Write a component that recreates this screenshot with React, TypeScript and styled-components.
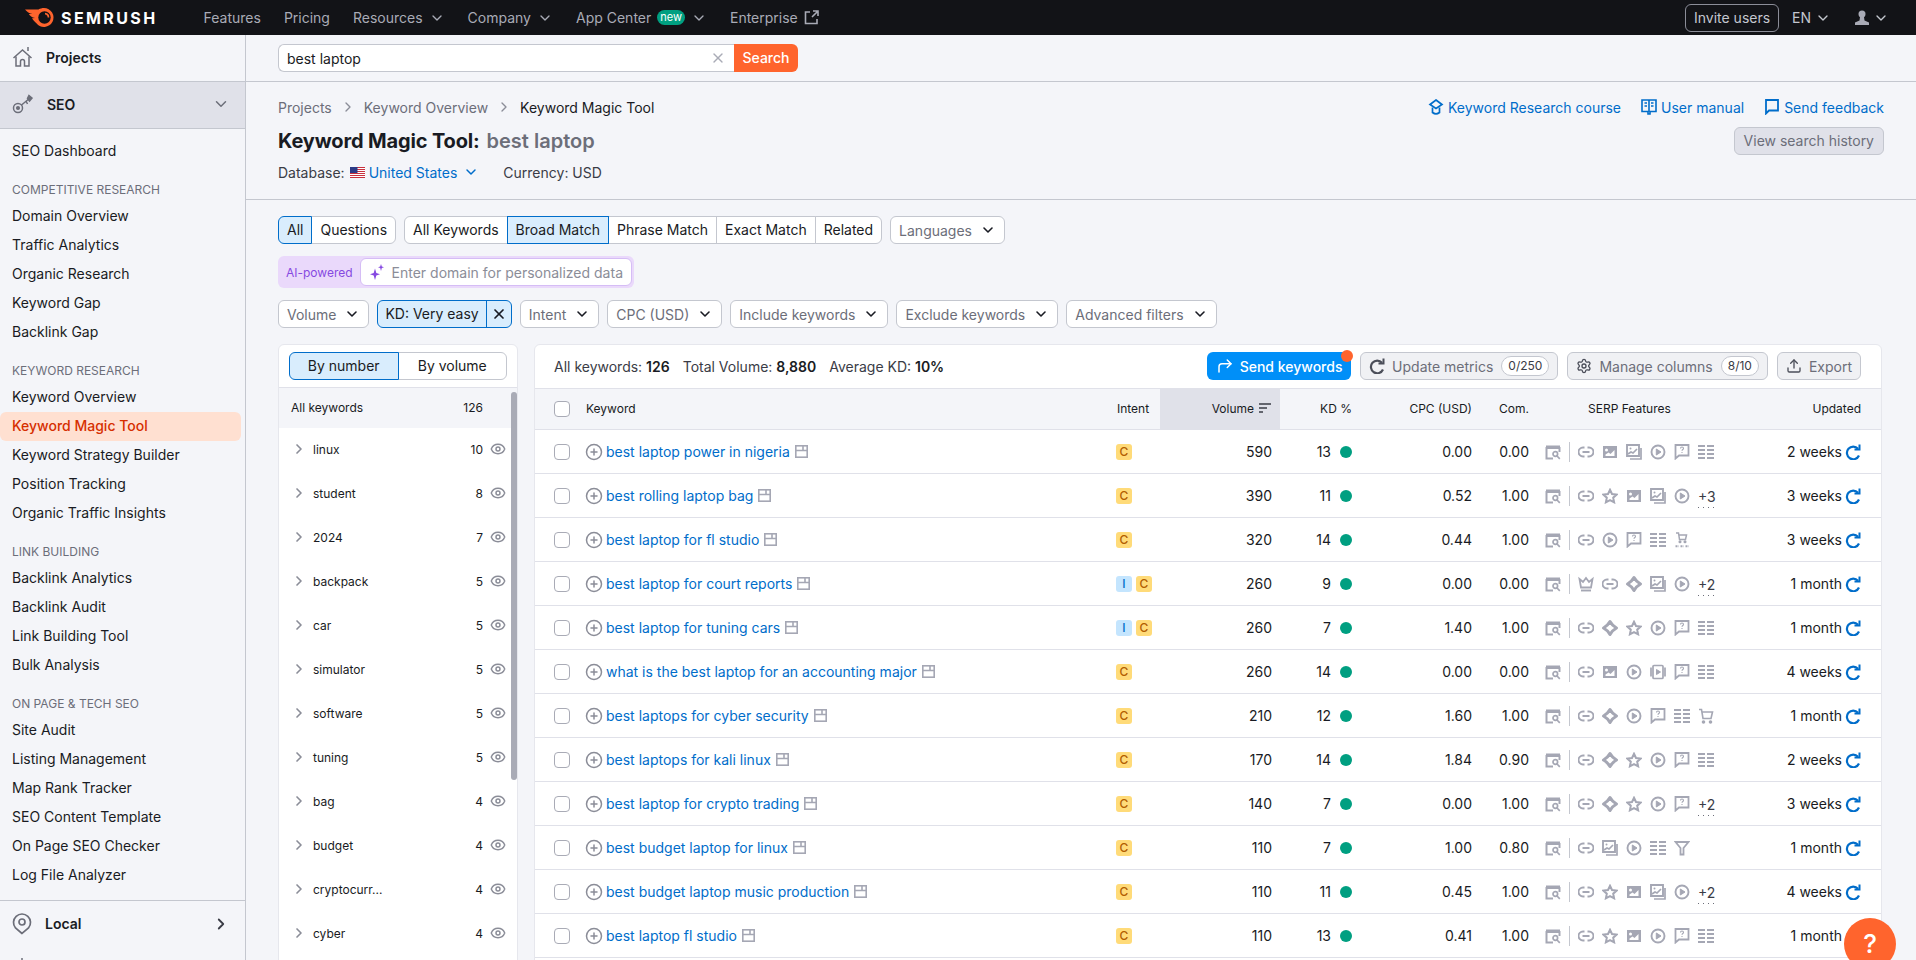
import React from "react";
import styled, { createGlobalStyle, css } from "styled-components";
import {
  ChevronDown,
  ChevronRight,
  CirclePlus,
  CornerUpRight,
  Eye,
  Settings,
  Upload,
  X,
} from "lucide-react";

const GlobalStyle = createGlobalStyle`
  * { box-sizing: border-box; }
  html, body { margin: 0; padding: 0; height: 100%; overflow: hidden; }
  body {
    background: #f4f5f9;
    color: #191b23;
    font-family: Inter, "Liberation Sans", sans-serif;
    font-size: 14px;
  }
`;

const Page = styled.div`
  height: 960px;
  display: flex;
  flex-direction: column;
  overflow: hidden;
`;

/* top bar */
const TopBar = styled.header`
  flex: 0 0 35px;
  background: #121317;
  display: flex;
  align-items: center;
  padding: 0 27px 0 25px;
`;

const Logo = styled.div`
  display: flex;
  align-items: center;
  gap: 5px;
  margin-right: 46px;
`;

const LogoText = styled.span`
  color: #fff;
  font-size: 16px;
  font-weight: 700;
  letter-spacing: 2.4px;
`;

const TopNav = styled.nav`
  display: flex;
  align-items: center;
  gap: 23px;
`;

const TopLink = styled.span`
  display: flex;
  align-items: center;
  gap: 6px;
  color: #a9abb6;
  white-space: nowrap;
`;

const NewBadge = styled.span`
  background: #009f81;
  color: #fff;
  font-size: 11px;
  line-height: 15px;
  padding: 0 3px;
  border-radius: 8px;
`;

const TopRight = styled.div`
  margin-left: auto;
  display: flex;
  align-items: center;
`;

const InviteButton = styled.span`
  height: 28px;
  width: 94px;
  display: flex;
  align-items: center;
  justify-content: center;
  border: 1px solid #8b8d98;
  border-radius: 6px;
  color: #c4c7cf;
  margin-right: 13px;
`;

const TopPlain = styled.span<{ $gap?: number }>`
  display: flex;
  align-items: center;
  gap: 4px;
  color: #c4c7cf;
  margin-right: ${(p) => p.$gap ?? 0}px;
`;

/* body layout */
const Body = styled.div`
  flex: 1;
  display: flex;
  min-height: 0;
`;

const Sidebar = styled.aside`
  flex: 0 0 246px;
  border-right: 1px solid #c4c7cf;
  overflow: hidden;
`;

const SideHead = styled.div<{ $active?: boolean }>`
  height: 47px;
  display: flex;
  align-items: center;
  padding: 0 15px 2px 12px;
  gap: 13px;
  font-weight: 600;
  color: #191b23;
  background: ${(p) => (p.$active ? "#e0e1e9" : "transparent")};
  border-bottom: 1px solid #c4c7cf;

  svg:last-child:not(:first-child) {
    margin-left: auto;
  }
`;

const SideFoot = styled(SideHead)`
  border-bottom: 0;
`;

const SideNav = styled.nav`
  padding: 8px 0 10px;
  border-bottom: 1px solid #c4c7cf;
`;

const SideGroup = styled.div`
  margin-top: 12px;
`;

const SideTitle = styled.div`
  height: 24px;
  line-height: 24px;
  padding-left: 12px;
  font-size: 12px;
  color: #6c6e79;
  white-space: nowrap;
`;

const SideItem = styled.div<{ $active?: boolean }>`
  height: 29px;
  line-height: 28px;
  padding-left: 12px;
  width: 241px;
  border-radius: 6px;
  white-space: nowrap;
  color: ${(p) => (p.$active ? "#d62f00" : "#191b23")};
  font-weight: ${(p) => (p.$active ? 500 : 400)};
  background: ${(p) => (p.$active ? "#ffe0d1" : "transparent")};
`;

const Main = styled.main`
  flex: 1;
  min-width: 0;
  overflow: hidden;
`;

const SearchStrip = styled.div`
  height: 47px;
  padding: 9px 0 0 32px;
  border-bottom: 1px solid #c4c7cf;
  display: flex;
  align-items: flex-start;
`;

const SearchInput = styled.div`
  width: 456px;
  height: 28px;
  background: #fff;
  border: 1px solid #c4c7cf;
  border-right: 0;
  border-radius: 6px 0 0 6px;
  display: flex;
  align-items: center;
  justify-content: space-between;
  padding: 0 8px;
`;

const SearchButton = styled.span`
  width: 64px;
  height: 28px;
  line-height: 28px;
  text-align: center;
  color: #fff;
  font-weight: 500;
  background: #ff642d;
  border-radius: 0 6px 6px 0;
`;

const PageHead = styled.section`
  display: flex;
  justify-content: space-between;
  padding: 15px 32px 17px 32px;
  border-bottom: 1px solid #c4c7cf;
`;

const HeadLeft = styled.div`
  display: flex;
  flex-direction: column;
`;

const HeadRight = styled.div`
  display: flex;
  flex-direction: column;
  align-items: flex-end;
  gap: 10px;
`;

const Crumbs = styled.div`
  height: 20px;
  display: flex;
  align-items: center;
  color: #6c6e79;
`;

const CrumbArrow = styled(ChevronRight)`
  color: #8b8d98;
  width: 16px;
  height: 16px;
  margin-inline: 8px;
`;

const CrumbLast = styled.span`
  color: #191b23;
`;

const Title = styled.h1`
  margin: 10px 0 0;
  font-size: 20px;
  line-height: 28px;
  font-weight: 700;
  letter-spacing: -0.15px;
  white-space: nowrap;
`;

const TitleQuery = styled.span`
  color: #6c6e79;
  font-weight: 600;
  letter-spacing: 0;
  margin-left: 7px;
`;

const DbRow = styled.div`
  margin-top: 7px;
  height: 20px;
  display: flex;
  align-items: center;
  color: #3a3c46;
`;

const DbLabel = styled.span`
  margin-right: 5px;
`;

const DbLink = styled.span`
  color: #006dca;
  margin: 0 6px 0 4px;
`;

const Currency = styled.span`
  margin-left: 24px;
`;

const HeadLinks = styled.div`
  height: 20px;
  display: flex;
  align-items: center;
  gap: 20px;
`;

const HeadLink = styled.span`
  display: flex;
  align-items: center;
  gap: 4px;
  color: #006dca;
`;

const HistoryButton = styled.span`
  height: 28px;
  padding: 0 9px;
  line-height: 26px;
  background: #e0e1e9;
  border: 1px solid #c4c7cf;
  border-radius: 6px;
  color: #6c6e79;
`;

const Content = styled.div`
  padding: 16px 34px 0 32px;
`;

const FilterRow = styled.div`
  display: flex;
  gap: 8px;
  margin-bottom: 12px;
`;

const Segments = styled.div`
  display: flex;
`;

const Segment = styled.span<{ $active?: boolean }>`
  height: 28px;
  line-height: 26px;
  padding: 0 8px;
  margin-left: -1px;
  white-space: nowrap;
  background: ${(p) => (p.$active ? "#d9edfd" : "#fff")};
  border: 1px solid ${(p) => (p.$active ? "#006dca" : "#c4c7cf")};
  position: relative;
  z-index: ${(p) => (p.$active ? 1 : 0)};

  &:first-child {
    margin-left: 0;
    border-radius: 6px 0 0 6px;
  }
  &:last-child {
    border-radius: 0 6px 6px 0;
  }
`;

const Select = styled.span`
  height: 28px;
  display: flex;
  align-items: center;
  gap: 8px;
  padding: 0 8px;
  background: #fff;
  border: 1px solid #c4c7cf;
  border-radius: 6px;
  color: #6c6e79;
  white-space: nowrap;

  svg {
    color: #191b23;
  }
`;

const ActiveFilter = styled.span`
  height: 28px;
  display: flex;
  align-items: center;
  background: #d9edfd;
  border: 1px solid #006dca;
  border-radius: 6px;
  white-space: nowrap;
`;

const ActiveLabel = styled.span`
  padding: 0 7px;
  line-height: 26px;
  border-right: 1px solid #006dca;
`;

const ActiveClear = styled.span`
  width: 24px;
  display: flex;
  justify-content: center;
`;

const AiBox = styled.div`
  width: 356px;
  height: 32px;
  display: flex;
  align-items: center;
  background: #ead9fb;
  border-radius: 6px;
  padding: 2px;
`;

const AiLabel = styled.span`
  width: 80px;
  padding-left: 6px;
  font-size: 12px;
  color: #8649e1;
  white-space: nowrap;
`;

const AiInput = styled.div`
  flex: 1;
  height: 28px;
  display: flex;
  align-items: center;
  gap: 7px;
  padding: 0 8px;
  background: #fff;
  border: 1px solid #d5bdf5;
  border-radius: 6px;
  color: #8b8d98;
  white-space: nowrap;
`;

const Panels = styled.div`
  display: flex;
  gap: 16px;
  margin-top: 16px;
`;

const Panel = styled.div`
  background: #fff;
  border: 1px solid #e6e7ed;
  border-radius: 6px 6px 0 0;
  height: 700px;
  overflow: hidden;
`;

/* left keyword groups */
const GroupPanel = styled(Panel)`
  flex: 0 0 240px;
  position: relative;
`;

const GroupTabs = styled.div`
  display: flex;
  padding: 7px 10px;
  border-bottom: 1px solid #e0e1e9;
`;

const GroupTab = styled(Segment)`
  flex: 1;
  text-align: center;
`;

const GroupHead = styled.div`
  height: 40px;
  background: #f4f5f9;
  display: flex;
  align-items: center;
  justify-content: space-between;
  padding: 0 34px 1px 12px;
  font-size: 12px;
`;

const GroupRow = styled.div`
  height: 44px;
  display: flex;
  align-items: center;
  padding: 0 11px 2px 12px;
  font-size: 12px;
  color: #191b23;
`;

const GroupName = styled.span`
  flex: 1;
  margin-left: 6px;
`;

const GroupCount = styled.span`
  width: 30px;
  text-align: right;
  margin-right: 7px;
`;

const Scrollbar = styled.div`
  position: absolute;
  right: 0;
  top: 47px;
  width: 6px;
  height: 388px;
  border-radius: 3px;
  background: #a9abb6;
`;

/* right table */
const TablePanel = styled(Panel)`
  flex: 1;
  min-width: 0;
`;

const Toolbar = styled.div`
  height: 44px;
  display: flex;
  align-items: center;
  padding: 0 20px 1px 19px;
  border-bottom: 1px solid #e0e1e9;
`;

const Summary = styled.div`
  display: flex;
  gap: 13px;
  color: #3a3c46;
  margin-right: auto;
`;

const SummaryNum = styled.b`
  font-weight: 600;
  color: #191b23;
`;

const ToolActions = styled.div`
  display: flex;
  gap: 9px;
`;

const SendButton = styled.span`
  position: relative;
  height: 28px;
  width: 144px;
  display: flex;
  align-items: center;
  justify-content: center;
  gap: 6px;
  background: #008ff8;
  color: #fff;
  font-weight: 500;
  border-radius: 6px;
`;

const RedDot = styled.span`
  position: absolute;
  top: -2px;
  right: -2px;
  width: 12px;
  height: 12px;
  border-radius: 50%;
  background: #ff642d;
`;

const GrayButton = styled.span`
  height: 28px;
  display: flex;
  align-items: center;
  gap: 7px;
  padding: 0 8px;
  background: #f0f1f4;
  border: 1px solid #c4c7cf;
  border-radius: 6px;
  color: #6c6e79;
  white-space: nowrap;

  > svg {
    color: #4b4e59;
  }
`;

const Counter = styled.span`
  height: 20px;
  line-height: 18px;
  padding: 0 6px;
  margin-left: 1px;
  font-size: 12px;
  background: #fff;
  border: 1px solid #c4c7cf;
  border-radius: 10px;
  color: #3a3c46;
`;

const columns = css`
  display: grid;
  grid-template-columns: 51px 530px 44px 120px 72px 120px 57px 220px 1fr;
  align-items: center;
`;

const HeadRow = styled.div`
  ${columns};
  height: 41px;
  background: #f4f5f9;
  border-bottom: 1px solid #e0e1e9;
  font-size: 12px;
`;

const HeadCell = styled.div<{ $sorted?: boolean; $right?: boolean; $pad?: number }>`
  height: 100%;
  display: flex;
  align-items: center;
  justify-content: ${(p) => (p.$right ? "flex-end" : "flex-start")};
  gap: 4px;
  padding: ${(p) => (p.$right ? `0 ${p.$pad ?? 0}px 2px 0` : `0 0 2px ${p.$pad ?? 0}px`)};
  background: ${(p) => (p.$sorted ? "#e0e1e9" : "transparent")};
`;

const Row = styled.div`
  ${columns};
  height: 44px;
  border-bottom: 1px solid #e0e1e9;
`;

const CheckCell = styled.div`
  padding-left: 19px;
`;

const Check = styled.span`
  display: block;
  width: 16px;
  height: 16px;
  background: #fff;
  border: 1px solid #a9abb6;
  border-radius: 4px;
`;

const KeywordCell = styled.div`
  display: flex;
  align-items: center;
  gap: 3px;
  min-width: 0;
  color: #8b8d98;
`;

const PlusIcon = styled(CirclePlus)`
  margin-left: -1px;
  flex: none;
`;

const KeywordLink = styled.span`
  color: #006dca;
  white-space: nowrap;
  margin-right: 2px;
`;

const Intents = styled.div`
  display: flex;
  gap: 4px;
`;

const Intent = styled.span<{ $kind: "C" | "I" }>`
  width: 16px;
  height: 16px;
  line-height: 16px;
  text-align: center;
  font-size: 12px;
  font-weight: 500;
  border-radius: 3px;
  color: ${(p) => (p.$kind === "C" ? "#b25e00" : "#006dca")};
  background: ${(p) => (p.$kind === "C" ? "#ffdb79" : "#c4e5fe")};
`;

const NumCell = styled.div<{ $pad?: number }>`
  text-align: right;
  padding-right: ${(p) => p.$pad ?? 0}px;
  color: #191b23;
`;

const KdCell = styled.div`
  display: flex;
  justify-content: flex-end;
  align-items: center;
  gap: 9px;
`;

const KdDot = styled.span`
  width: 12px;
  height: 12px;
  border-radius: 50%;
  background: #009f81;
`;

const SerpCell = styled.div`
  display: flex;
  align-items: center;
  gap: 8px;
  padding-left: 16px;
  color: #a5a7b4;
`;

const SerpDivider = styled.span`
  width: 1px;
  height: 20px;
  background: #c4c7cf;
`;

const SerpSlot = styled.span`
  width: 16px;
  height: 16px;
  display: block;
  flex: none;
`;

const SerpMore = styled.span`
  width: 19px;
  font-size: 14px;
  line-height: 16px;
  color: #3a3c46;
  white-space: nowrap;
  padding-bottom: 3px;
  margin-top: 5px;
  background: repeating-linear-gradient(90deg, #6c6e79 0 1.5px, transparent 1.5px 5px) bottom / 100% 1px no-repeat;
`;

const UpdatedCell = styled.div`
  display: flex;
  justify-content: flex-end;
  align-items: center;
  gap: 3px;
  padding-right: 20px;
`;

const HelpButton = styled.div`
  position: fixed;
  left: 1844px;
  top: 918px;
  width: 52px;
  height: 52px;
  border-radius: 50%;
  background: #ff642d;
  color: #fff;
  font-size: 26px;
  font-weight: 500;
  line-height: 52px;
  text-align: center;
`;

/* drawn icons */
type SvgProps = React.SVGProps<SVGSVGElement>;

const Svg = ({ children, ...rest }: SvgProps) => (
  <svg width="16" height="16" viewBox="0 0 16 16" fill="none" stroke="currentColor" strokeWidth="1.7" {...rest}>
    {children}
  </svg>
);

const Flame = () => (
  <svg width="31" height="19" viewBox="0 0 31 19">
    <path
      fill="#ff642d"
      d="M0 1.500h13.500c1.700-1 3.500-1.500 5.500-1.500a9.500 9.500 0 1 1-7.600 15.200C9.600 13.500 8 12 7 10.300l3-.3C7 9.500 4.800 7.800 3.800 6h3.700C4.500 5.500 1.800 3.800 0 1.500z"
    />
    <circle cx="19.500" cy="9.500" r="6.200" fill="#121317" />
    <path fill="#ff642d" d="M20 4.800a4.700 4.700 0 0 1 4.300 4.700h-1.700a3 3 0 0 0-2.600-3z" />
  </svg>
);

const HomeIcon = () => (
  <svg width="21" height="22" viewBox="0 0 21 22" fill="none" stroke="#6c6e79" strokeWidth="1.5">
    <path d="M1.500 12 10.500 4l9 8" />
    <path d="M4 10.500V20h4.500v-4.500a2 2 0 0 1 4 0V20H17v-9.500" />
    <path d="M16 1v4" />
  </svg>
);

const SeoIcon = () => (
  <svg width="22" height="22" viewBox="0 0 22 22" fill="none" stroke="#6c6e79" strokeWidth="1.5">
    <circle cx="6" cy="15" r="4.500" />
    <circle cx="6" cy="15" r="1.300" fill="#6c6e79" />
    <path d="M9.500 12 18 5" />
    <path d="m14 8 1.500 3M17 2.500l3 2.500-2.500 3-2-2.500z" fill="#6c6e79" />
  </svg>
);

const PinIcon = () => (
  <svg width="20" height="22" viewBox="0 0 20 22" fill="none" stroke="#6c6e79" strokeWidth="1.7">
    <path d="M10 20.500 3.500 15a8.500 8.500 0 1 1 13 0z" />
    <circle cx="10" cy="9" r="3" />
  </svg>
);

const TickIcon = () => (
  <svg width="20" height="26" viewBox="0 0 20 26" fill="none" stroke="#6c6e79" strokeWidth="1.5">
    <path d="M10 0v4" />
  </svg>
);

const FlagIcon = () => (
  <svg width="15" height="11" viewBox="0 0 15 11">
    <rect width="15" height="11" fill="#fff" />
    <path d="M0 .5h15M0 2.500h15M0 4.500h15M0 6.500h15M0 8.500h15M0 10.500h15" stroke="#c8313e" strokeWidth="1" />
    <rect width="7.500" height="6" fill="#2b3a86" />
  </svg>
);

const CourseIcon = () => (
  <svg width="16" height="16" viewBox="0 0 16 16" fill="none" stroke="#006dca" strokeWidth="1.7">
    <path d="M8 1 14 5.500 8 9.500 2 5.500z" />
    <path d="M4.500 8.500v5c2 1.500 5 1.500 7 0v-5" />
  </svg>
);

const BookIcon = () => (
  <svg width="16" height="16" viewBox="0 0 16 16" fill="none" stroke="#006dca" strokeWidth="1.6">
    <path d="M1 1h14v11.500H9V15H7v-2.500H1z" />
    <path d="M8 1v12" />
    <path d="M3.500 4H6M3.500 7H6M10 4h2.500M10 7h2.500" strokeWidth="1.300" />
  </svg>
);

const FeedbackIcon = () => (
  <svg width="16" height="16" viewBox="0 0 16 16" fill="none" stroke="#006dca" strokeWidth="1.8">
    <path d="M2 1h12v10.500H5L2 14.500z" />
  </svg>
);

const SparkIcon = () => (
  <svg width="16" height="16" viewBox="0 0 16 16" fill="#8649e1">
    <path d="M6 4.500 7.300 9 11 10.200 7.300 11.500 6 16 4.700 11.500 1 10.200 4.700 9z" />
    <path d="M12 0l.8 2.500 2.200.8-2.200.8L12 7l-.8-2.900L9 3.300l2.200-.8z" />
  </svg>
);

const RefreshIcon = ({ color = "#006dca" }: { color?: string }) => (
  <svg width="16" height="16" viewBox="0 0 16 16" fill="none" stroke={color} strokeWidth="2.200">
    <path d="M13 4.800A6.300 6.300 0 1 0 14 11.500" />
    <path d="M14.500 .5v5H9.500" strokeWidth="2" />
  </svg>
);

const UserIcon = () => (
  <svg width="14" height="15" viewBox="0 0 14 15" fill="#a9abb6">
    <circle cx="7" cy="4" r="3.500" />
    <path d="M5 7h4l.5 3.500L14 12.500V15H0v-2.500l4.500-2z" />
  </svg>
);

const SortIcon = () => (
  <svg width="14" height="12" viewBox="0 0 14 12" fill="none" stroke="#3a3c46" strokeWidth="1.500">
    <path d="M1 2h12M1 6h8M1 10h4" />
  </svg>
);

const EyeIcon = styled(Eye)`
  color: #8b8d98;
  flex: none;
`;

const SaveIcon = styled.svg`
  width: 13px;
  height: 13px;
  flex: none;
`;

const serpIcons: Record<string, React.ReactNode> = {
  page: (
    <Svg>
      <path d="M1.500 3v11.500H8M14.500 3v5" strokeWidth="2" />
      <path d="M1 1.500h14v3.500H1z" fill="currentColor" stroke="none" />
      <circle cx="10.300" cy="10" r="2.300" />
      <path d="m12 12 2.800 2.800" />
    </Svg>
  ),
  link: (
    <Svg strokeWidth="1.900">
      <path d="M6.500 3.500H5a4.500 4.500 0 0 0 0 9h1.500M9.500 3.500H11a4.500 4.500 0 0 1 0 9H9.500M4.500 8h7" />
    </Svg>
  ),
  image: (
    <Svg stroke="none" fill="currentColor">
      <path fillRule="evenodd" d="M1 2h14v12H1zm2.500 8.500v1.500h9V6l-4 4-2-1.500zM4.500 4.500a1.500 1.500 0 1 0 0 3 1.500 1.500 0 0 0 0-3z" />
    </Svg>
  ),
  images: (
    <Svg>
      <path d="M1 1h12v11H1z" strokeWidth="1.900" />
      <path d="M15 4v11H4" />
      <path d="m2 10 3-2 2 1 4-4" />
      <circle cx="4.500" cy="4.500" r="1" fill="currentColor" stroke="none" />
    </Svg>
  ),
  play: (
    <Svg strokeWidth="1.900">
      <circle cx="8" cy="8" r="6.500" />
      <path d="M6.300 5v6L11 8z" fill="currentColor" strokeWidth="1" />
    </Svg>
  ),
  question: (
    <Svg strokeWidth="1.800">
      <path d="M1.500 1h13v10.500H5l-3.500 3z" />
      <path d="M6.500 4.500c0-2 3-2 3 0 0 1-1.500 1-1.500 2.300M8 8v1" strokeWidth="1.100" />
    </Svg>
  ),
  list: (
    <Svg strokeWidth="2">
      <path d="M0 2h7M9 2h7M0 6h7M9 6h7M0 10h7M9 10h7M0 14h7M9 14h7" />
    </Svg>
  ),
  star: (
    <Svg strokeWidth="2">
      <path d="m8 1.800 2 4.200 4.600.6-3.400 3.100.9 4.600L8 12.100l-4.100 2.200.9-4.600-3.400-3.100L6 6z" />
    </Svg>
  ),
  crown: (
    <Svg strokeWidth="1.800">
      <path d="m1.500 3 3.500 3 3-4 3 4 3.500-3-1.500 8.500H3z" />
      <path d="M3 14.500h10" strokeWidth="1.900" />
    </Svg>
  ),
  diamond: (
    <svg width="18" height="18" viewBox="0 0 18 18" fill="none" stroke="currentColor" strokeWidth="3" strokeLinejoin="round" style={{ margin: "-1px" }}>
      <path d="M9 2.500Q11.300 6.700 15.500 9 11.300 11.300 9 15.500 6.700 11.300 2.500 9 6.700 6.700 9 2.500z" />
    </svg>
  ),
  cartDots: (
    <Svg strokeWidth="1.500">
      <path d="M2 1h2.500l1 6.500h6l1-4.500H5" />
      <circle cx="6" cy="9.800" r=".8" fill="currentColor" />
      <circle cx="11" cy="9.800" r=".8" fill="currentColor" />
      <path d="M1.500 14.300h3M6.500 14.300h3M11.500 14.300h3" strokeWidth="2" strokeDasharray="2 .6" />
    </Svg>
  ),
  cart: (
    <Svg strokeWidth="1.600">
      <path d="M1 1.500h2.500l1.500 9h8l1.500-6.500H4" />
      <circle cx="5.500" cy="14" r="1" fill="currentColor" />
      <circle cx="12.500" cy="14" r="1" fill="currentColor" />
    </Svg>
  ),
  funnel: (
    <Svg strokeWidth="1.800">
      <path d="M1.500 2h13L9.500 8v6.500h-3V8z" />
    </Svg>
  ),
  video: (
    <Svg>
      <path d="M4 1.500h8a1 1 0 0 1 1 1v11a1 1 0 0 1-1 1H4a1 1 0 0 1-1-1v-11a1 1 0 0 1 1-1z" />
      <path d="M1 3.500v9M15 3.500v9" />
      <path d="M6.500 5.500v5L10.500 8z" fill="currentColor" strokeWidth="1" />
    </Svg>
  ),
};

const sideGroups = [
  {
    title: "COMPETITIVE RESEARCH",
    items: ["Domain Overview", "Traffic Analytics", "Organic Research", "Keyword Gap", "Backlink Gap"],
  },
  {
    title: "KEYWORD RESEARCH",
    items: [
      "Keyword Overview",
      "Keyword Magic Tool",
      "Keyword Strategy Builder",
      "Position Tracking",
      "Organic Traffic Insights",
    ],
  },
  {
    title: "LINK BUILDING",
    items: ["Backlink Analytics", "Backlink Audit", "Link Building Tool", "Bulk Analysis"],
  },
  {
    title: "ON PAGE & TECH SEO",
    items: [
      "Site Audit",
      "Listing Management",
      "Map Rank Tracker",
      "SEO Content Template",
      "On Page SEO Checker",
      "Log File Analyzer",
    ],
  },
];

const keywordGroups: [string, number][] = [
  ["linux", 10],
  ["student", 8],
  ["2024", 7],
  ["backpack", 5],
  ["car", 5],
  ["simulator", 5],
  ["software", 5],
  ["tuning", 5],
  ["bag", 4],
  ["budget", 4],
  ["cryptocurr...", 4],
  ["cyber", 4],
];

type KeywordRow = {
  keyword: string;
  intents: ("C" | "I")[];
  volume: number;
  kd: number;
  cpc: string;
  com: string;
  serp: string[];
  more?: number;
  updated: string;
};

const rows: KeywordRow[] = [
  { keyword: "best laptop power in nigeria", intents: ["C"], volume: 590, kd: 13, cpc: "0.00", com: "0.00", serp: ["link", "image", "images", "play", "question", "list"], updated: "2 weeks" },
  { keyword: "best rolling laptop bag", intents: ["C"], volume: 390, kd: 11, cpc: "0.52", com: "1.00", serp: ["link", "star", "image", "images", "play"], more: 3, updated: "3 weeks" },
  { keyword: "best laptop for fl studio", intents: ["C"], volume: 320, kd: 14, cpc: "0.44", com: "1.00", serp: ["link", "play", "question", "list", "cartDots"], updated: "3 weeks" },
  { keyword: "best laptop for court reports", intents: ["I", "C"], volume: 260, kd: 9, cpc: "0.00", com: "0.00", serp: ["crown", "link", "diamond", "images", "play"], more: 2, updated: "1 month" },
  { keyword: "best laptop for tuning cars", intents: ["I", "C"], volume: 260, kd: 7, cpc: "1.40", com: "1.00", serp: ["link", "diamond", "star", "play", "question", "list"], updated: "1 month" },
  { keyword: "what is the best laptop for an accounting major", intents: ["C"], volume: 260, kd: 14, cpc: "0.00", com: "0.00", serp: ["link", "image", "play", "video", "question", "list"], updated: "4 weeks" },
  { keyword: "best laptops for cyber security", intents: ["C"], volume: 210, kd: 12, cpc: "1.60", com: "1.00", serp: ["link", "diamond", "play", "question", "list", "cart"], updated: "1 month" },
  { keyword: "best laptops for kali linux", intents: ["C"], volume: 170, kd: 14, cpc: "1.84", com: "0.90", serp: ["link", "diamond", "star", "play", "question", "list"], updated: "2 weeks" },
  { keyword: "best laptop for crypto trading", intents: ["C"], volume: 140, kd: 7, cpc: "0.00", com: "1.00", serp: ["link", "diamond", "star", "play", "question"], more: 2, updated: "3 weeks" },
  { keyword: "best budget laptop for linux", intents: ["C"], volume: 110, kd: 7, cpc: "1.00", com: "0.80", serp: ["link", "images", "play", "list", "funnel"], updated: "1 month" },
  { keyword: "best budget laptop music production", intents: ["C"], volume: 110, kd: 11, cpc: "0.45", com: "1.00", serp: ["link", "star", "image", "images", "play"], more: 2, updated: "4 weeks" },
  { keyword: "best laptop fl studio", intents: ["C"], volume: 110, kd: 13, cpc: "0.41", com: "1.00", serp: ["link", "star", "image", "play", "question", "list"], updated: "1 month" },
];

const filterSelects = ["Intent", "CPC (USD)", "Include keywords", "Exclude keywords", "Advanced filters"];

export default function App() {
  return (
    <Page>
      <GlobalStyle />
      <TopBar>
        <Logo>
          <Flame />
          <LogoText>SEMRUSH</LogoText>
        </Logo>
        <TopNav>
          <TopLink>Features</TopLink>
          <TopLink>Pricing</TopLink>
          <TopLink>
            Resources <ChevronDown size={16} />
          </TopLink>
          <TopLink>
            Company <ChevronDown size={16} />
          </TopLink>
          <TopLink>
            App Center <NewBadge>new</NewBadge> <ChevronDown size={16} />
          </TopLink>
          <TopLink>
            Enterprise
            <svg width="15" height="15" viewBox="0 0 15 15" fill="none" stroke="currentColor" strokeWidth="1.600">
              <path d="M6 2H1.500v11.500H13V9M8 7l5.500-5.500M9 1h5v5" />
            </svg>
          </TopLink>
        </TopNav>
        <TopRight>
          <InviteButton>Invite users</InviteButton>
          <TopPlain $gap={24}>
            EN <ChevronDown size={16} />
          </TopPlain>
          <TopPlain>
            <UserIcon /> <ChevronDown size={16} />
          </TopPlain>
        </TopRight>
      </TopBar>

      <Body>
        <Sidebar>
          <SideHead>
            <HomeIcon />
            <span>Projects</span>
          </SideHead>
          <SideHead $active>
            <SeoIcon />
            <span>SEO</span>
            <ChevronDown size={18} color="#6c6e79" />
          </SideHead>
          <SideNav>
            <SideItem>SEO Dashboard</SideItem>
            {sideGroups.map((group) => (
              <SideGroup key={group.title}>
                <SideTitle>{group.title}</SideTitle>
                {group.items.map((item) => (
                  <SideItem key={item} $active={item === "Keyword Magic Tool"}>
                    {item}
                  </SideItem>
                ))}
              </SideGroup>
            ))}
          </SideNav>
          <SideFoot>
            <PinIcon />
            <span>Local</span>
            <ChevronRight size={18} color="#3a3c46" strokeWidth={2.4} />
          </SideFoot>
          <SideFoot>
            <TickIcon />
          </SideFoot>
        </Sidebar>

        <Main>
          <SearchStrip>
            <SearchInput>
              <span>best laptop</span>
              <X size={16} color="#a9abb6" />
            </SearchInput>
            <SearchButton>Search</SearchButton>
          </SearchStrip>

          <PageHead>
            <HeadLeft>
              <Crumbs>
                Projects
                <CrumbArrow />
                Keyword Overview
                <CrumbArrow />
                <CrumbLast>Keyword Magic Tool</CrumbLast>
              </Crumbs>
              <Title>
                Keyword Magic Tool:
                <TitleQuery>best laptop</TitleQuery>
              </Title>
              <DbRow>
                <DbLabel>Database:</DbLabel>
                <FlagIcon />
                <DbLink>United States</DbLink>
                <ChevronDown size={16} color="#006dca" strokeWidth={2.2} />
                <Currency>Currency: USD</Currency>
              </DbRow>
            </HeadLeft>
            <HeadRight>
              <HeadLinks>
                <HeadLink>
                  <CourseIcon /> Keyword Research course
                </HeadLink>
                <HeadLink>
                  <BookIcon /> User manual
                </HeadLink>
                <HeadLink>
                  <FeedbackIcon /> Send feedback
                </HeadLink>
              </HeadLinks>
              <HistoryButton>View search history</HistoryButton>
            </HeadRight>
          </PageHead>

          <Content>
            <FilterRow>
              <Segments>
                <Segment $active>All</Segment>
                <Segment>Questions</Segment>
              </Segments>
              <Segments>
                <Segment>All Keywords</Segment>
                <Segment $active>Broad Match</Segment>
                <Segment>Phrase Match</Segment>
                <Segment>Exact Match</Segment>
                <Segment>Related</Segment>
              </Segments>
              <Select>
                Languages <ChevronDown size={16} strokeWidth={2.4} />
              </Select>
            </FilterRow>

            <FilterRow>
              <AiBox>
                <AiLabel>AI-powered</AiLabel>
                <AiInput>
                  <SparkIcon />
                  Enter domain for personalized data
                </AiInput>
              </AiBox>
            </FilterRow>

            <FilterRow>
              <Select>
                Volume <ChevronDown size={16} strokeWidth={2.4} />
              </Select>
              <ActiveFilter>
                <ActiveLabel>KD: Very easy</ActiveLabel>
                <ActiveClear>
                  <X size={16} strokeWidth={2.6} />
                </ActiveClear>
              </ActiveFilter>
              {filterSelects.map((label) => (
                <Select key={label}>
                  {label} <ChevronDown size={16} strokeWidth={2.4} />
                </Select>
              ))}
            </FilterRow>

            <Panels>
              <GroupPanel>
                <GroupTabs>
                  <GroupTab $active>By number</GroupTab>
                  <GroupTab>By volume</GroupTab>
                </GroupTabs>
                <GroupHead>
                  <span>All keywords</span>
                  <span>126</span>
                </GroupHead>
                {keywordGroups.map(([name, count]) => (
                  <GroupRow key={name}>
                    <ChevronRight size={16} color="#8b8d98" strokeWidth={2.5} />
                    <GroupName>{name}</GroupName>
                    <GroupCount>{count}</GroupCount>
                    <EyeIcon size={16} strokeWidth={2.2} />
                  </GroupRow>
                ))}
                <Scrollbar />
              </GroupPanel>

              <TablePanel>
                <Toolbar>
                  <Summary>
                    <span>
                      All keywords: <SummaryNum>126</SummaryNum>
                    </span>
                    <span>
                      Total Volume: <SummaryNum>8,880</SummaryNum>
                    </span>
                    <span>
                      Average KD: <SummaryNum>10%</SummaryNum>
                    </span>
                  </Summary>
                  <ToolActions>
                    <SendButton>
                      <CornerUpRight size={18} />
                      Send keywords
                      <RedDot />
                    </SendButton>
                    <GrayButton>
                      <RefreshIcon color="#4b4e59" />
                      Update metrics
                      <Counter>0/250</Counter>
                    </GrayButton>
                    <GrayButton>
                      <Settings size={16} />
                      Manage columns
                      <Counter>8/10</Counter>
                    </GrayButton>
                    <GrayButton>
                      <Upload size={16} />
                      Export
                    </GrayButton>
                  </ToolActions>
                </Toolbar>

                <HeadRow>
                  <CheckCell>
                    <Check />
                  </CheckCell>
                  <HeadCell>Keyword</HeadCell>
                  <HeadCell $pad={1}>Intent</HeadCell>
                  <HeadCell $sorted $right $pad={8}>
                    Volume <SortIcon />
                  </HeadCell>
                  <HeadCell $right>KD %</HeadCell>
                  <HeadCell $right>CPC (USD)</HeadCell>
                  <HeadCell $right>Com.</HeadCell>
                  <HeadCell $pad={59}>SERP Features</HeadCell>
                  <HeadCell $right $pad={20}>
                    Updated
                  </HeadCell>
                </HeadRow>

                {rows.map((row) => (
                  <Row key={row.keyword}>
                    <CheckCell>
                      <Check />
                    </CheckCell>
                    <KeywordCell>
                      <PlusIcon size={18} strokeWidth={2} />
                      <KeywordLink>{row.keyword}</KeywordLink>
                      <SaveIcon viewBox="0 0 13 13" fill="none" stroke="#a5a7b4" strokeWidth="1.600">
                        <rect x=".8" y=".8" width="11.400" height="11.400" />
                        <path d="M1 5.500h11M8 1v4.500" />
                      </SaveIcon>
                    </KeywordCell>
                    <Intents>
                      {row.intents.map((kind) => (
                        <Intent key={kind} $kind={kind}>
                          {kind}
                        </Intent>
                      ))}
                    </Intents>
                    <NumCell $pad={8}>{row.volume}</NumCell>
                    <KdCell>
                      {row.kd}
                      <KdDot />
                    </KdCell>
                    <NumCell>{row.cpc}</NumCell>
                    <NumCell>{row.com}</NumCell>
                    <SerpCell>
                      <SerpSlot>{serpIcons.page}</SerpSlot>
                      <SerpDivider />
                      {row.serp.map((name, i) => (
                        <SerpSlot key={i}>{serpIcons[name]}</SerpSlot>
                      ))}
                      {row.more && <SerpMore>+{row.more}</SerpMore>}
                    </SerpCell>
                    <UpdatedCell>
                      {row.updated}
                      <RefreshIcon />
                    </UpdatedCell>
                  </Row>
                ))}
              </TablePanel>
            </Panels>
          </Content>
        </Main>
      </Body>

      <HelpButton>?</HelpButton>
    </Page>
  );
}
